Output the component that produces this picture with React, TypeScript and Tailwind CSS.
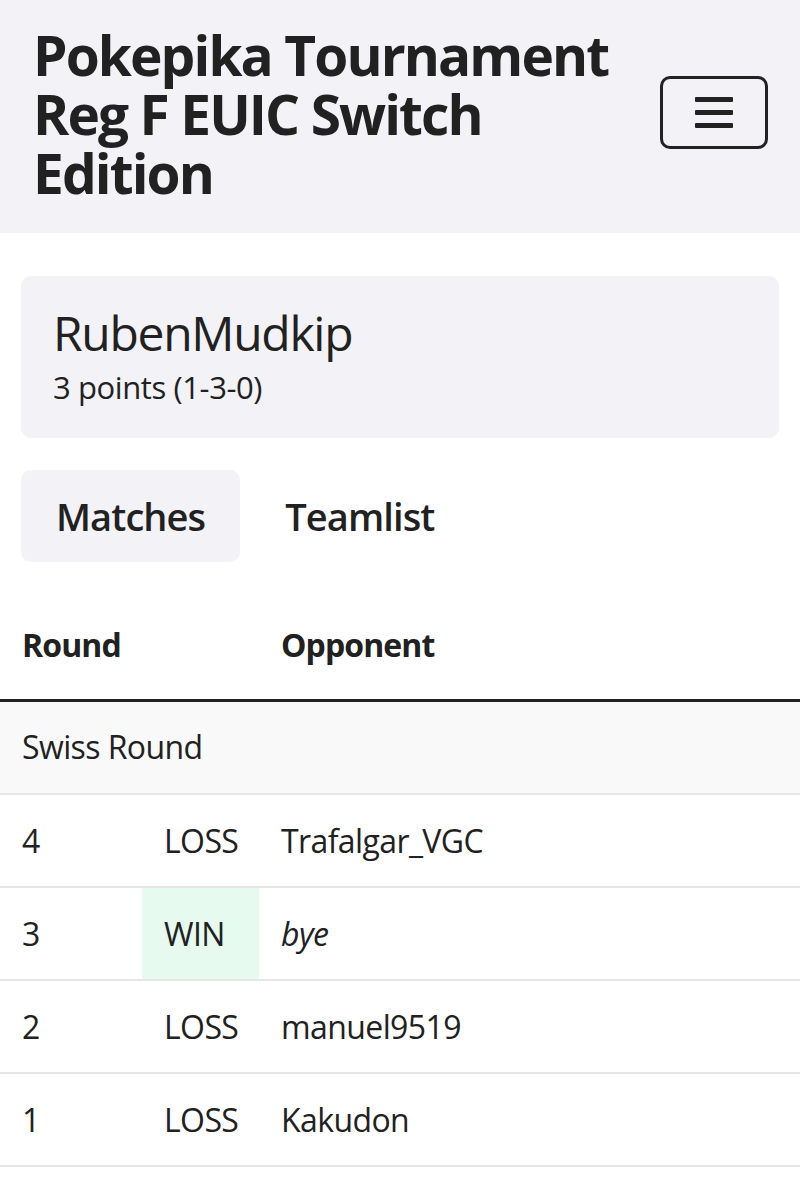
import React from "react";

const rows = [
  { round: "4", result: "LOSS", opp: "Trafalgar_VGC", win: false, italic: false },
  { round: "3", result: "WIN", opp: "bye", win: true, italic: true },
  { round: "2", result: "LOSS", opp: "manuel9519", win: false, italic: false },
  { round: "1", result: "LOSS", opp: "Kakudon", win: false, italic: false },
];

export default function App() {
  return (
    <div className="w-[800px] min-h-[1200px] bg-white text-[#212121]" style={{ fontFamily: '"Open Sans", sans-serif' }}>
      <header className="bg-[#f2f2f7] h-[233px] flex items-center justify-between pl-[33px] pr-[32px]">
        <h1 className="text-[55px] leading-[59px] font-bold tracking-[-1.9px] pb-[6px] w-[600px]">
          Pokepika Tournament Reg F EUIC Switch Edition
        </h1>
        <button className="w-[108px] h-[73px] border-[3px] border-[#222] rounded-[10px] flex flex-col items-center justify-center gap-[8px] -mt-[8px]">
          <span className="block w-[38px] h-[5px] bg-[#222] rounded-[1px]" />
          <span className="block w-[38px] h-[5px] bg-[#222] rounded-[1px]" />
          <span className="block w-[38px] h-[5px] bg-[#222] rounded-[1px]" />
        </button>
      </header>

      <main className="pt-[43px]">
        <div className="mx-[21px] bg-[#f2f2f7] rounded-[10px] h-[162px] pl-[32px] pt-[26px]">
          <div className="text-[48px] leading-[62px] tracking-[-1.3px]">RubenMudkip</div>
          <div className="text-[31px] leading-[46px] tracking-[-0.4px]">3 points (1-3-0)</div>
        </div>

        <div className="mx-[21px] mt-[32px] flex gap-[10px]">
          <div className="px-[35px] h-[92px] bg-[#f2f2f7] rounded-[10px] flex items-center justify-center text-[38px] font-semibold tracking-[-0.9px]">
            Matches
          </div>
          <div className="px-[35px] h-[92px] flex items-center justify-center text-[38px] font-semibold tracking-[-0.9px]">
            Teamlist
          </div>
        </div>

        <table className="w-full mt-[30px] border-collapse text-[32px] tracking-[-0.6px]">
          <thead>
            <tr className="h-[108px] border-b-[3px] border-[#222]">
              <th className="text-left font-bold pl-[22px] w-[259px] tracking-[-0.9px]" colSpan={2}>Round</th>
              <th className="text-left font-bold pl-[22px] tracking-[-0.9px]">Opponent</th>
            </tr>
          </thead>
          <tbody>
            <tr className="h-[94px] bg-[#f9f9f9] border-b-2 border-[#e6e6e6]">
              <td className="pl-[22px]" colSpan={3}>Swiss Round</td>
            </tr>
            {rows.map((r) => (
              <tr key={r.round} className="h-[93px] border-b-2 border-[#e6e6e6]">
                <td className="pl-[22px] w-[142px]">{r.round}</td>
                <td className={`pl-[22px] w-[117px] ${r.win ? "bg-[#e7faef]" : ""}`}>{r.result}</td>
                <td className={`pl-[22px] ${r.italic ? "italic" : ""}`}>{r.opp}</td>
              </tr>
            ))}
          </tbody>
        </table>
      </main>
    </div>
  );
}
